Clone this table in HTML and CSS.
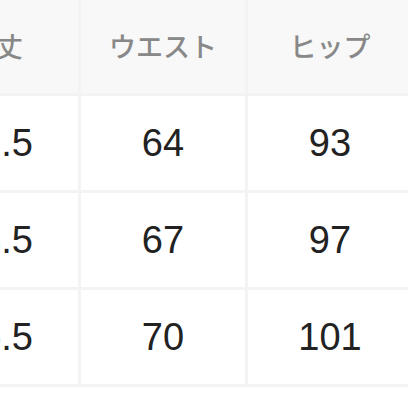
FILE: index.html
```html
<!DOCTYPE html>
<html lang="ja">
<head>
<meta charset="utf-8">
<link rel="stylesheet" href="styles.css">
</head>
<body>
<div class="size-table">
  <div class="cell head">着丈</div>
  <div class="cell head">ウエスト</div>
  <div class="cell head">ヒップ</div>
  <div class="cell">72.5</div>
  <div class="cell">64</div>
  <div class="cell">93</div>
  <div class="cell">73.5</div>
  <div class="cell">67</div>
  <div class="cell">97</div>
  <div class="cell">75.5</div>
  <div class="cell">70</div>
  <div class="cell">101</div>
</div>
</body>
</html>
```

FILE: styles.css
```css
html, body {
  margin: 0;
  padding: 0;
  background: #ffffff;
  overflow: hidden;
}
.size-table {
  display: grid;
  grid-template-columns: repeat(3, 164px);
  grid-template-rows: 93px repeat(3, 94px);
  gap: 3px;
  padding-bottom: 3px;
  background: #f3f3f3;
  margin-left: -86px;
  width: max-content;
}
.cell {
  display: flex;
  align-items: center;
  justify-content: center;
  background: #ffffff;
  color: #222222;
  font-family: "Liberation Sans", Arial, sans-serif;
  font-size: 38px;
}
.head {
  background: #f8f8f8;
  color: #888888;
  font-family: "Noto Sans CJK JP", "Noto Sans", sans-serif;
  font-size: 27px;
  font-weight: 500;
  padding-bottom: 3px;
}
```
